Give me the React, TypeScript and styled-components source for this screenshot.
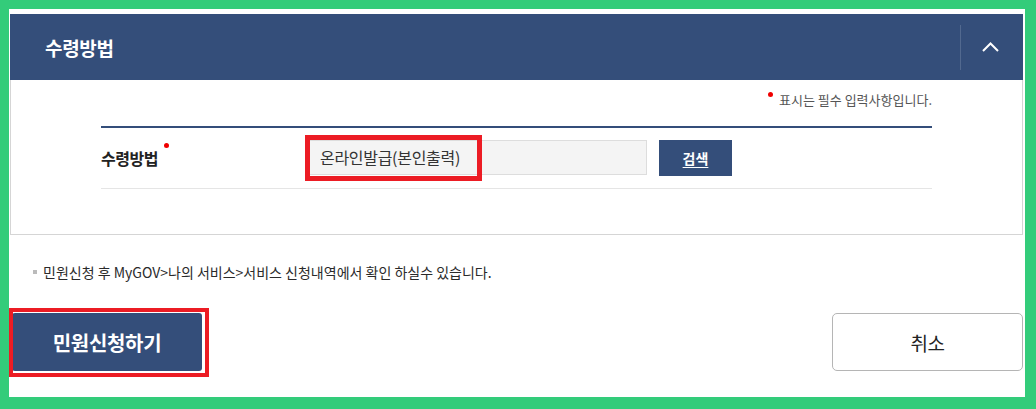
import React from 'react';
import styled, { createGlobalStyle } from 'styled-components';

const NAVY = '#344e7a';
const RED = '#ec1c24';

const GlobalStyle = createGlobalStyle`
  html, body {
    margin: 0;
    padding: 0;
    background: #33cc7a;
  }
  body {
    font-family: 'Noto Sans CJK KR', 'Noto Sans', sans-serif;
    color: #222;
  }
  * {
    box-sizing: border-box;
  }
`;

const Frame = styled.div`
  padding: 9px 11px 12px 9px;
`;

const Page = styled.div`
  height: 388px;
  padding-top: 5px;
  background: #fff;
`;

const SectionHeader = styled.div`
  display: flex;
  align-items: center;
  height: 66px;
  margin: 0 2px 0 1px;
  background: ${NAVY};
`;

const SectionTitle = styled.h2`
  flex: 1;
  margin: 0;
  padding-left: 35px;
  color: #fff;
  font-size: 19px;
  font-weight: 700;
  letter-spacing: -0.3px;
`;

const ToggleButton = styled.button`
  display: flex;
  align-items: center;
  justify-content: center;
  width: 63px;
  height: 45px;
  padding: 0 4px 0 0;
  border: 0;
  border-left: 1px solid #52698f;
  background: transparent;
  cursor: pointer;
`;

const SectionBody = styled.div`
  height: 155px;
  margin: 0 2px 0 1px;
  padding: 11px 90px 0;
  border: 1px solid #d5d5d5;
  border-top: 0;
`;

const RequiredNote = styled.p`
  margin: 0;
  height: 18px;
  line-height: 18px;
  text-align: right;
  font-size: 13px;
  color: #555;
`;

const Dot = styled.span<{ $lift: number }>`
  display: inline-block;
  position: relative;
  top: -${p => p.$lift}px;
  width: 5px;
  height: 5px;
  margin-right: 6px;
  border-radius: 50%;
  background: #f00000;
  vertical-align: middle;
`;

const FormTable = styled.div`
  margin-top: 17px;
  border-top: 2px solid ${NAVY};
`;

const FormRow = styled.div`
  display: flex;
  align-items: center;
  height: 61px;
  border-bottom: 1px solid #e5e5e5;
`;

const RowLabel = styled.div`
  width: 208px;
  font-size: 16px;
  font-weight: 700;
  letter-spacing: -0.5px;
  color: #222;

  ${Dot} {
    margin: 0 0 0 6px;
  }
`;

const FieldGroup = styled.div`
  display: flex;
  align-items: flex-start;
  gap: 12px;
`;

const ReadonlyField = styled.div`
  position: relative;
  width: 338px;
  height: 35px;
  padding-left: 10px;
  border: 1px solid #ddd;
  background: #f4f4f4;
  font-size: 16px;
  line-height: 33px;
  letter-spacing: -0.3px;
  color: #333;
`;

const SearchButton = styled.button`
  width: 73px;
  height: 36px;
  border: 0;
  background: ${NAVY};
  color: #fff;
  font-family: inherit;
  font-size: 14px;
  font-weight: 700;
  text-decoration: underline;
  text-underline-offset: 3px;
  cursor: pointer;
`;

const Notice = styled.p`
  display: flex;
  align-items: center;
  height: 20px;
  margin: 27px 0 0;
  padding-left: 24px;
  font-size: 14px;
  color: #2a2a2a;

  &::before {
    content: '';
    width: 4px;
    height: 4px;
    margin-right: 6px;
    background: #bbb;
  }
`;

const Actions = styled.div`
  display: flex;
  justify-content: space-between;
  margin-top: 31px;
  padding: 0 2px 0 3px;
`;

const AnnotatedArea = styled.div`
  position: relative;
`;

const Annotation = styled.span<{ $inset: string; $weight: number }>`
  position: absolute;
  inset: ${p => p.$inset};
  border: ${p => p.$weight}px solid ${RED};
  pointer-events: none;
`;

const PrimaryButton = styled.button`
  display: block;
  width: 190px;
  height: 58px;
  border: 0;
  border-radius: 3px;
  background: ${NAVY};
  color: #fff;
  font-family: inherit;
  font-size: 20px;
  font-weight: 700;
  letter-spacing: -0.3px;
  cursor: pointer;
`;

const CancelButton = styled.button`
  width: 191px;
  height: 58px;
  border: 1px solid #b5b5b5;
  border-radius: 5px;
  background: #fff;
  color: #222;
  font-family: inherit;
  font-size: 19px;
  letter-spacing: -0.5px;
  cursor: pointer;
`;

const ChevronUp = () => (
  <svg width="17" height="10" viewBox="0 0 17 10" fill="none">
    <polyline points="1,9 8.5,1.5 16,9" stroke="#fff" strokeWidth="2" />
  </svg>
);

export default function App() {
  return (
    <>
      <GlobalStyle />
      <Frame>
        <Page>
          <SectionHeader>
            <SectionTitle>수령방법</SectionTitle>
            <ToggleButton aria-label="접기">
              <ChevronUp />
            </ToggleButton>
          </SectionHeader>
          <SectionBody>
            <RequiredNote>
              <Dot $lift={7} />
              표시는 필수 입력사항입니다.
            </RequiredNote>
            <FormTable>
              <FormRow>
                <RowLabel>
                  수령방법
                  <Dot $lift={15} />
                </RowLabel>
                <FieldGroup>
                  <ReadonlyField>
                    온라인발급(본인출력)
                    <Annotation $inset="-6px auto auto -5px" $weight={5} style={{ width: 177, height: 46 }} />
                  </ReadonlyField>
                  <SearchButton>검색</SearchButton>
                </FieldGroup>
              </FormRow>
            </FormTable>
          </SectionBody>
          <Notice>민원신청 후 MyGOV&gt;나의 서비스&gt;서비스 신청내역에서 확인 하실수 있습니다.</Notice>
          <Actions>
            <AnnotatedArea>
              <PrimaryButton>민원신청하기</PrimaryButton>
              <Annotation $inset="-5px -7px -6px -3px" $weight={4} />
            </AnnotatedArea>
            <CancelButton>취소</CancelButton>
          </Actions>
        </Page>
      </Frame>
    </>
  );
}
